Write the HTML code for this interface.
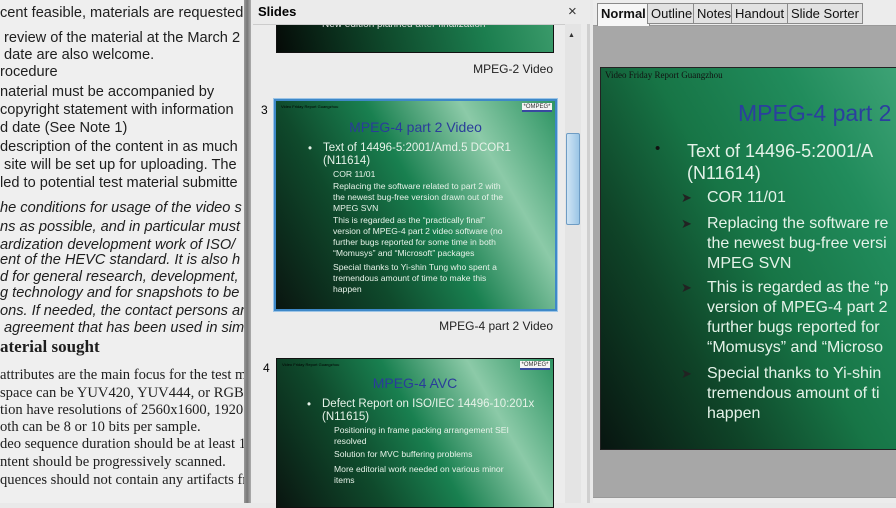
<!DOCTYPE html>
<html><head><meta charset="utf-8">
<style>
*{margin:0;padding:0;box-sizing:border-box}
body{width:896px;height:503px;overflow:hidden;position:relative;background:#e9e9e9;font-family:"Liberation Sans",sans-serif}
.abs{position:absolute;white-space:nowrap}
#doc{position:absolute;left:0;top:0;width:246px;height:503px;background:#efefef;overflow:hidden;color:#1e1e1e}
#doc .l{position:absolute;left:0;white-space:nowrap;font-size:14.6px;line-height:16px}
#doc .s{font-family:"Liberation Serif",serif;font-size:14.6px}
#doc .i{font-style:italic}
#shadow{position:absolute;left:244px;top:0;width:8px;height:503px;background:linear-gradient(90deg,#999,#777 40%,#bbb)}
#slides{position:absolute;left:251px;top:0;width:339px;height:503px;background:#ebebeb}
.thumb{position:absolute;background:linear-gradient(60deg,#0a1510 0%,#0f4a2c 30%,#198050 52%,#8ccaa8 76%,#2d9463 100%);overflow:hidden;color:#e6f2e8}
.hdr{position:absolute;font-size:4px;color:#000;left:5px;top:3px}
.logo{position:absolute;right:3px;top:2px;width:30px;height:9px;background:#f4f4f4;border-bottom:2px solid #3848a0;font-size:6px;color:#333;text-align:center;line-height:8px}
.tt{position:absolute;color:#2a3c9a;font-size:14px;width:100%;text-align:center}
.b1{position:absolute;font-size:11.5px;line-height:13px}
.b2{position:absolute;font-size:8.6px;line-height:11px;white-space:nowrap}
#right{position:absolute;left:593px;top:0;width:303px;height:503px;background:#a7a7a7}
.tab{position:absolute;top:3px;height:21px;border:1px solid #8a8a8a;background:#e2e2e2;font-size:13px;line-height:19px;padding:0 3px;color:#111}
</style></head><body>
<div id="doc">
<div class="l" style="top:5px">cent feasible, materials are requested</div>
<div class="l" style="top:30px">&nbsp;review of the material at the March 2</div>
<div class="l" style="top:47px">&nbsp;date are also welcome.</div>
<div class="l" style="top:64px">rocedure</div>
<div class="l" style="top:84px">naterial must be accompanied by</div>
<div class="l" style="top:102px">copyright statement with information</div>
<div class="l" style="top:120px">d date (See Note 1)</div>
<div class="l" style="top:139px">description of the content in as much</div>
<div class="l" style="top:157px">&nbsp;site will be set up for uploading. The</div>
<div class="l" style="top:175px">led to potential test material submitte</div>
<div class="l i" style="top:200px">he conditions for usage of the video s</div>
<div class="l i" style="top:219px">ns as possible, and in particular must</div>
<div class="l i" style="top:237px">ardization development work of ISO/</div>
<div class="l i" style="top:252px">ent of the HEVC standard. It is also h</div>
<div class="l i" style="top:269px">d for general research, development,</div>
<div class="l i" style="top:285px">g technology and for snapshots to be</div>
<div class="l i" style="top:303px">ons. If needed, the contact persons ar</div>
<div class="l i" style="top:320px">&nbsp;agreement that has been used in sim</div>
<div class="l s" style="top:337px;font-weight:bold;font-size:17px;line-height:20px">aterial sought</div>
<div class="l s" style="top:367px">attributes are the main focus for the test m</div>
<div class="l s" style="top:385px">space can be YUV420, YUV444, or RGB.</div>
<div class="l s" style="top:402px">tion have resolutions of 2560x1600, 1920</div>
<div class="l s" style="top:419px">oth can be 8 or 10 bits per sample.</div>
<div class="l s" style="top:436px">deo sequence duration should be at least 1</div>
<div class="l s" style="top:454px">ntent should be progressively scanned.</div>
<div class="l s" style="top:472px">quences should not contain any artifacts fr</div>
</div>
<div id="shadow"></div>
<div id="slides">
 <div class="abs" style="left:2px;top:24px;width:312px;height:479px;background:#ececec;border-top:1px solid #ccc"></div>
 <!-- slide 2 bottom -->
 <div class="thumb" style="left:25px;top:25px;width:278px;height:28px;border:1px solid #111;border-top:none;background:linear-gradient(75deg,#050a07 0%,#0f4a2c 40%,#1c7e4f 75%,#3a9a6a 100%)">
  <div class="abs" style="left:45px;top:-6px;font-size:10px;color:#ddd">New edition planned after finalization</div>
 </div>
 <div class="abs" style="left:0;top:0;width:339px;height:24px;background:#ebebeb"></div>
 <div class="abs" style="left:7px;top:4px;font-weight:bold;font-size:13px">Slides</div>
 <div class="abs" style="left:317px;top:3px;font-size:15px;color:#333">×</div>
 <div class="abs" style="right:37px;top:62px;font-size:12px;color:#222">MPEG-2 Video</div>
 <div class="abs" style="left:10px;top:103px;font-size:12px">3</div>
 <div class="thumb" style="left:23px;top:99px;width:283px;height:212px;border:2px solid #3e88c8;box-shadow:0 0 0 1px #9cc4e6">
  <div class="hdr">Video Friday Report Guangzhou</div>
  <div class="logo">*OMPEG*</div>
  <div class="tt" style="top:18px">MPEG-4 part 2 Video</div>
  <div class="b1" style="left:32px;top:42px">•</div>
  <div class="b1" style="left:47px;top:41px">Text of 14496-5:2001/Amd.5 DCOR1<br>(N11614)</div>
  <div class="b2" style="left:57px;top:68px">COR 11/01</div>
  <div class="b2" style="left:57px;top:80px">Replacing the software related to part 2 with<br>the newest bug-free version drawn out of the<br>MPEG SVN</div>
  <div class="b2" style="left:57px;top:114px">This is regarded as the “practically final”<br>version of MPEG-4 part 2 video software (no<br>further bugs reported for some time in both<br>“Momusys” and “Microsoft” packages</div>
  <div class="b2" style="left:57px;top:161px">Special thanks to Yi-shin Tung who spent a<br>tremendous amount of time to make this<br>happen</div>
 </div>
 <div class="abs" style="right:37px;top:319px;font-size:12px;color:#222">MPEG-4 part 2 Video</div>
 <div class="abs" style="left:12px;top:361px;font-size:12px">4</div>
 <div class="thumb" style="left:25px;top:358px;width:278px;height:150px;border:1px solid #111">
  <div class="hdr">Video Friday Report Guangzhou</div>
  <div class="logo">*OMPEG*</div>
  <div class="tt" style="top:16px">MPEG-4 AVC</div>
  <div class="b1" style="left:30px;top:40px">•</div>
  <div class="b1" style="left:45px;top:39px">Defect Report on ISO/IEC 14496-10:201x<br>(N11615)</div>
  <div class="b2" style="left:57px;top:66px">Positioning in frame packing arrangement SEI<br>resolved</div>
  <div class="b2" style="left:57px;top:90px">Solution for MVC buffering problems</div>
  <div class="b2" style="left:57px;top:105px">More editorial work needed on various minor<br>items</div>
 </div>
 <!-- scrollbar -->
 <div class="abs" style="left:314px;top:24px;width:16px;height:479px;background:#e4e4e4"></div>
 <div class="abs" style="left:317px;top:32px;font-size:7px;color:#333">▲</div>
 <div class="abs" style="left:315px;top:133px;width:14px;height:92px;background:linear-gradient(90deg,#cfe4f4,#9cc6e6);border:1px solid #6e9cc4;border-radius:2px"></div>
 <div class="abs" style="left:336px;top:24px;width:3px;height:479px;background:#cfcfcf"></div>
</div>
<div id="right">
 <div class="abs" style="left:0;top:0;width:303px;height:26px;background:#ececec;border-bottom:1px solid #999"></div>
 <div class="tab" style="left:4px;background:#f6f6f6;font-weight:bold;height:23px;border-bottom:none">Normal</div>
 <div class="tab" style="left:54px">Outline</div>
 <div class="tab" style="left:100px">Notes</div>
 <div class="tab" style="left:138px">Handout</div>
 <div class="tab" style="left:194px">Slide Sorter</div>
 <div class="thumb" style="left:7px;top:67px;width:300px;height:383px;border:1px solid #222;background:linear-gradient(60deg,#081510 0%,#0f4428 28%,#177546 52%,#218c5c 78%,#3ea376 100%);color:#e4f2e8">
  <div class="abs" style="left:4px;top:2px;font-family:'Liberation Serif',serif;font-size:9px;color:#111">Video Friday Report Guangzhou</div>
  <div class="abs" style="left:137px;top:32px;font-size:23px;color:#2b3f9e">MPEG-4 part 2</div>
  <div class="abs" style="left:54px;top:72px;font-size:15px;color:#111">•</div>
  <div class="abs" style="left:86px;top:72px;font-size:18px;line-height:22px">Text of 14496-5:2001/A<br>(N11614)</div>
  <div class="abs" style="left:80px;top:122px;font-size:13px;color:#222">➤</div>
  <div class="abs" style="left:106px;top:120px;font-size:16px;line-height:20px">COR 11/01</div>
  <div class="abs" style="left:80px;top:148px;font-size:13px;color:#222">➤</div>
  <div class="abs" style="left:106px;top:146px;font-size:16px;line-height:20px">Replacing the software re<br>the newest bug-free versi<br>MPEG SVN</div>
  <div class="abs" style="left:80px;top:212px;font-size:13px;color:#222">➤</div>
  <div class="abs" style="left:106px;top:210px;font-size:16px;line-height:20px">This is regarded as the “p<br>version of MPEG-4 part 2<br>further bugs reported for<br>“Momusys” and “Microso</div>
  <div class="abs" style="left:80px;top:298px;font-size:13px;color:#222">➤</div>
  <div class="abs" style="left:106px;top:296px;font-size:16px;line-height:20px">Special thanks to Yi-shin<br>tremendous amount of ti<br>happen</div>
 </div>
 <div class="abs" style="left:0;top:497px;width:303px;height:6px;background:#ececec;border-top:1px solid #999"></div>
</div>
</body></html>
